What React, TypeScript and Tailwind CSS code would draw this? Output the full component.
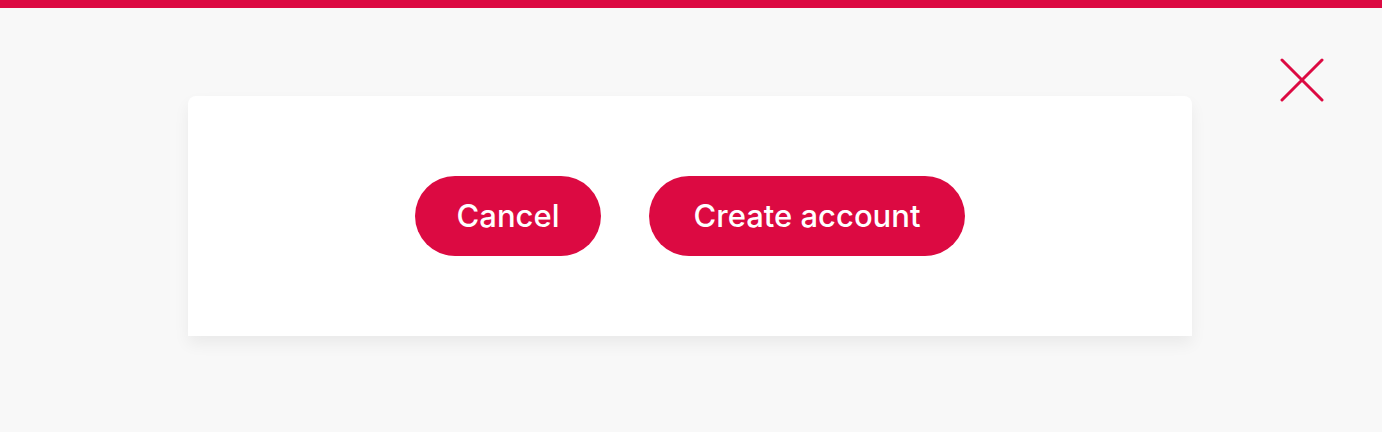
export default function App() {
  return (
    <div className="relative min-h-[432px] bg-[#f8f8f8] font-['Inter','Liberation_Sans',sans-serif]">
      <div className="h-2 bg-[#dc0a42]" />
      <button type="button" aria-label="Close" className="absolute right-[58px] top-[58px] text-[#dc0a42]">
        <svg width="44" height="44" viewBox="0 0 44 44" fill="none" stroke="currentColor" strokeWidth="3" strokeLinecap="round">
          <path d="M2 2 L42 42 M42 2 L2 42" />
        </svg>
      </button>
      <div className="ml-[188px] mt-[88px] flex h-[240px] w-[1004px] items-center justify-center gap-12 rounded-t-lg bg-white shadow-[0_8px_16px_rgba(0,0,0,0.06)]">
        <button type="button" className="h-20 w-[186px] rounded-full bg-[#dc0a42] text-[31px] font-medium text-white">
          Cancel
        </button>
        <button type="button" className="h-20 w-[316px] rounded-full bg-[#dc0a42] text-[31px] font-medium text-white">
          Create account
        </button>
      </div>
    </div>
  );
}
